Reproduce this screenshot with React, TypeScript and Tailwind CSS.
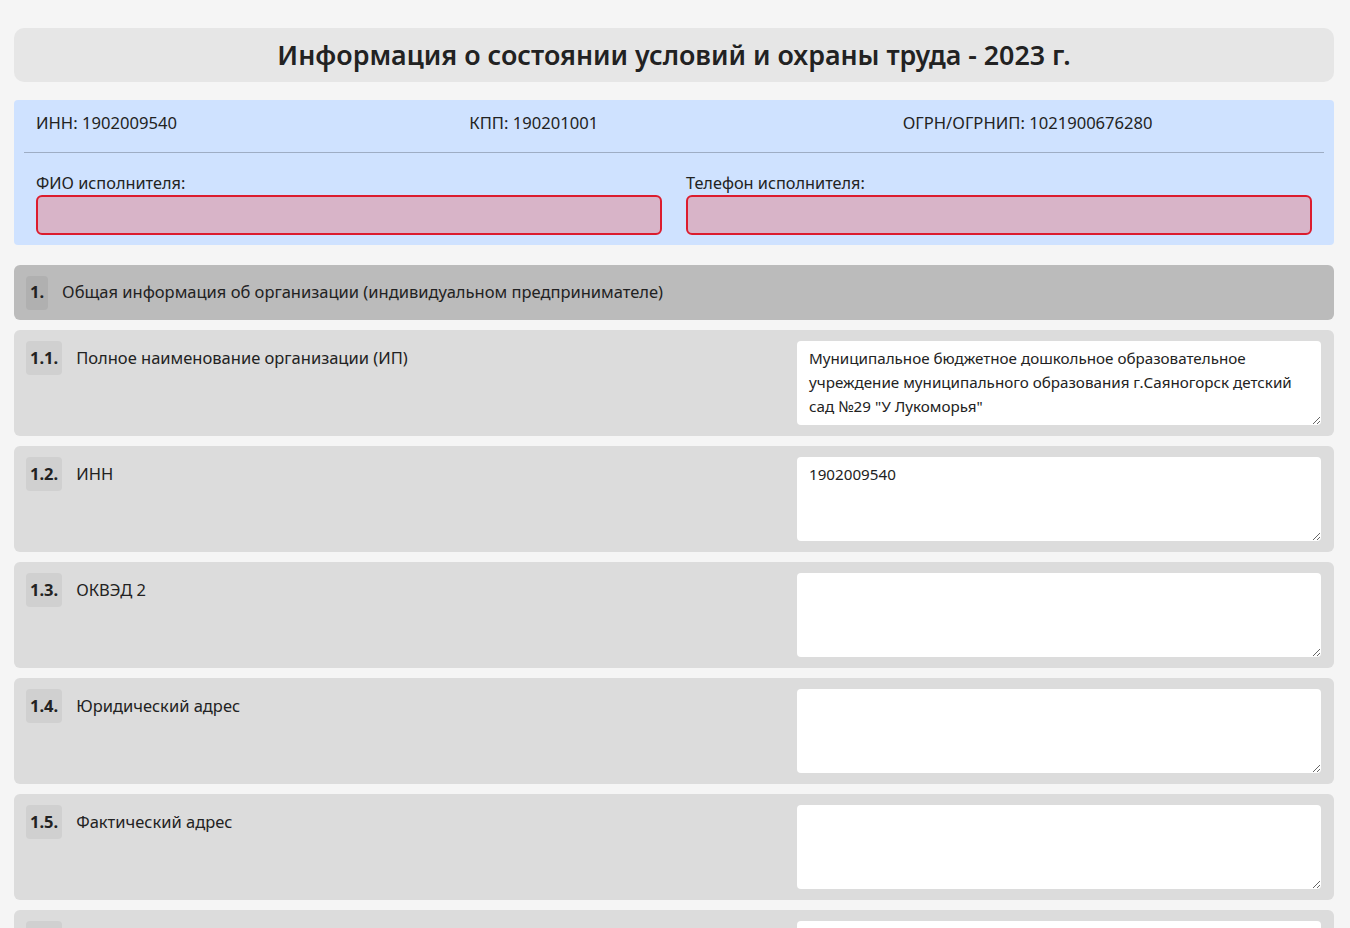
import React from "react";

// ─── Data ─────────────────────────────────────────────────────────────────────

const rows = [
  {
    num: "1.1.",
    label: "Полное наименование организации (ИП)",
    value:
      'Муниципальное бюджетное дошкольное образовательное учреждение муниципального образования г.Саяногорск детский сад №29 "У Лукоморья"',
  },
  { num: "1.2.", label: "ИНН", value: "1902009540" },
  { num: "1.3.", label: "ОКВЭД 2", value: "" },
  { num: "1.4.", label: "Юридический адрес", value: "" },
  { num: "1.5.", label: "Фактический адрес", value: "" },
  { num: "1.6.", label: "Руководитель организации (ИП)", value: "" },
];

const font = { fontFamily: '"Noto Sans", "Open Sans", sans-serif' };

// ─── Components ───────────────────────────────────────────────────────────────

function Row({ num, label, value }: { num: string; label: string; value: string }) {
  return (
    <div className="flex items-start justify-between rounded-md bg-[#dcdcdc] pl-3 pr-[13px] py-[11px]">
      <div className="flex items-start gap-[14px]">
        <span className="flex h-[34px] items-center rounded-sm bg-[#d0d0d0] px-[4px] text-[16.5px] font-bold text-[#222]">
          {num}
        </span>
        <span className="pt-[5px] text-[16.5px] text-[#222]">{label}</span>
      </div>
      <textarea
        className="h-[84px] w-[524px] rounded bg-white px-3 py-[5px] text-[15.2px] leading-6 text-[#222] outline-none"
        defaultValue={value}
        style={font}
      />
    </div>
  );
}

export default function App() {
  return (
    <div className="min-h-screen bg-[#f5f5f5] pl-[14px] pr-[16px] pt-[28px] pb-6 text-[#222]" style={font}>
      {/* Title */}
      <div className="flex h-[54px] items-center justify-center rounded-[10px] bg-[#e6e6e6]">
        <h1 className="text-[26.8px] font-semibold text-[#222]">
          Информация о состоянии условий и охраны труда - 2023 г.
        </h1>
      </div>

      {/* Requisites */}
      <div className="mt-[18px] rounded bg-[#cfe2ff] px-[10px] pb-[10px]">
        <div className="grid grid-cols-3 border-b border-[#9eadc4] pt-[11px] pb-[17px] text-[16.6px] leading-[24px]">
          <span className="px-3">ИНН: 1902009540</span>
          <span className="px-3">КПП: 190201001</span>
          <span className="px-3">ОГРН/ОГРНИП: 1021900676280</span>
        </div>
        <div className="grid grid-cols-2 pt-[20px]">
          <label className="block px-3">
            <span className="block text-[16.3px] leading-[20px]">ФИО исполнителя:</span>
            <input className="mt-[2px] block h-[40px] w-full rounded-md border-2 border-[#dc1c2e] bg-[#d8b4c8] outline-none" />
          </label>
          <label className="block px-3">
            <span className="block text-[16.3px] leading-[20px]">Телефон исполнителя:</span>
            <input className="mt-[2px] block h-[40px] w-full rounded-md border-2 border-[#dc1c2e] bg-[#d8b4c8] outline-none" />
          </label>
        </div>
      </div>

      {/* Section 1 */}
      <div className="mt-[20px] flex h-[55px] items-center gap-[14px] rounded-md bg-[#bbbbbb] px-3">
        <span className="flex h-[34px] items-center rounded-sm bg-[#b0b0b0] px-[4px] text-[16.5px] font-bold">
          1.
        </span>
        <span className="text-[16.5px]">Общая информация об организации (индивидуальном предпринимателе)</span>
      </div>

      <div className="mt-[10px] flex flex-col gap-[10px]">
        {rows.map((r) => (
          <Row key={r.num} {...r} />
        ))}
      </div>
    </div>
  );
}
